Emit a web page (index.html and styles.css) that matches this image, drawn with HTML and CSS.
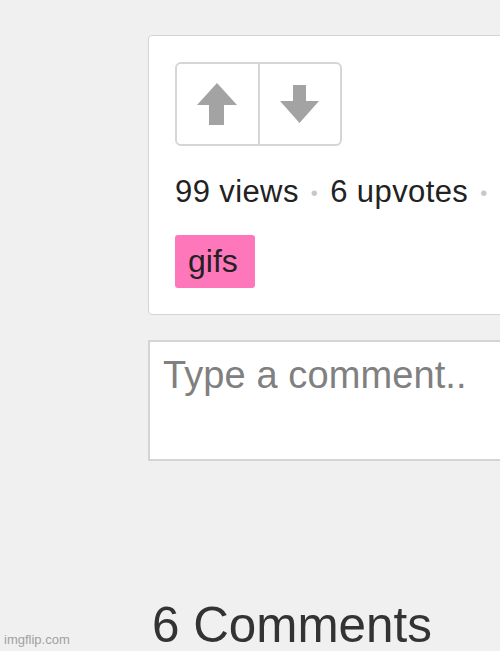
FILE: index.html
```html
<!DOCTYPE html>
<html lang="en">
<head>
  <meta charset="UTF-8" />
  <meta name="viewport" content="width=device-width, initial-scale=1.0" />
  <title>gifs</title>
  <link rel="stylesheet" href="styles.css">
</head>
<body>
  <main class="column">
    <div class="img-card">
      <div class="vote-box">
        <button class="vote" title="upvote">
          <svg width="40" height="42" viewBox="0 0 40 42"><path d="M20 0 L40 22 L27 22 L27 42 L12 42 L12 22 L0 22 Z" fill="#a3a3a3"/></svg>
        </button>
        <button class="vote" title="downvote">
          <svg width="40" height="38" viewBox="0 0 40 38"><path d="M13 0 L26 0 L26 16 L39 16 L19.5 38 L0 16 L13 16 Z" fill="#a3a3a3"/></svg>
        </button>
      </div>
      <div class="img-meta">
        <span>99 views</span><span class="dot">•</span><span>6 upvotes</span><span class="dot">•</span>
      </div>
      <div class="tags">
        <a class="tag" href="#">gifs</a>
      </div>
    </div>

    <textarea class="comment-input" placeholder="Type a comment.."></textarea>

    <h2 class="comments-title">6 Comments</h2>
  </main>

  <div class="watermark">imgflip.com</div>
</body>
</html>
```

FILE: styles.css
```css
body {
  font-family: 'Liberation Sans', Arial, sans-serif;
  background-color: #f0f0f0;
  margin: 0;
  padding: 0;
  overflow: hidden;
  height: 651px;
}
.column {
  margin-left: 148px;
  width: 420px;
  padding-top: 35px;
}
.img-card {
  background-color: white;
  border: 1px solid #d4d4d4;
  border-radius: 4px;
  padding: 26px 26px 26px 26px;
}
.vote-box {
  display: flex;
  width: 167px;
  height: 84px;
  border: 2px solid #d6d6d6;
  border-radius: 6px;
  box-sizing: border-box;
}
.vote {
  flex: 1;
  display: flex;
  align-items: center;
  justify-content: center;
  background: white;
  border: none;
  padding: 0;
  border-radius: 6px;
  cursor: pointer;
}
.vote + .vote {
  border-left: 2px solid #d6d6d6;
  border-radius: 0 6px 6px 0;
}
.img-meta {
  margin-top: 26px;
  font-size: 31px;
  letter-spacing: 0.4px;
  color: #222;
  white-space: nowrap;
  line-height: 40px;
}
.dot {
  color: #c8c8c8;
  font-size: 20px;
  margin: 0 12px;
  vertical-align: 2px;
}
.tags {
  margin-top: 22px;
}
.tag {
  display: inline-block;
  background-color: #ff77bb;
  color: #222;
  text-decoration: none;
  font-size: 32px;
  line-height: 53px;
  padding: 0 17px 0 13px;
  border-radius: 3px;
}
.comment-input {
  display: block;
  margin-top: 25px;
  width: 420px;
  height: 121px;
  box-sizing: border-box;
  border: 2px solid #d4d4d4;
  border-radius: 0;
  padding: 12px 13px;
  font-family: 'Liberation Sans', Arial, sans-serif;
  font-size: 38px;
  letter-spacing: 0.1px;
  resize: none;
  background: white;
}
.comment-input::placeholder {
  color: #808080;
}
.comments-title {
  font-weight: normal;
  font-size: 49.4px;
  color: #333;
  margin: 135px 0 0 4px;
}
.watermark {
  position: absolute;
  left: 4px;
  bottom: 4px;
  font-size: 13px;
  color: #a0a0a0;
}
```
